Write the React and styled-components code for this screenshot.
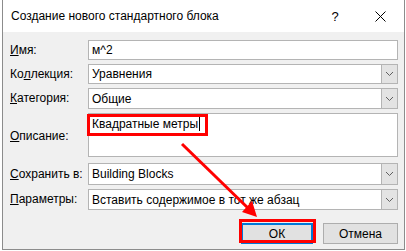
import React from "react";
import styled, { createGlobalStyle } from "styled-components";

const GlobalStyle = createGlobalStyle`
  html, body {
    margin: 0;
    padding: 0;
    background: #ffffff;
  }
  body {
    font-family: "Liberation Sans", Arial, sans-serif;
    font-size: 12px;
    color: #000;
  }
`;

const Page = styled.div`
  position: relative;
  width: 406px;
  height: 251px;
  overflow: hidden;
`;

const Dialog = styled.div`
  box-sizing: border-box;
  margin-left: 2px;
  width: 403px;
  height: 250px;
  border: 1px solid #8c8c8c;
  border-top: none;
  background: #f0f0f0;
  display: flex;
  flex-direction: column;
`;

const TitleBar = styled.div`
  height: 32px;
  background: #ffffff;
  display: flex;
  align-items: center;
  padding-left: 8px;
  flex-shrink: 0;
`;

const Title = styled.div`
  flex: 1;
  font-size: 12px;
  padding-bottom: 1px;
`;

const TitleButton = styled.div`
  width: ${p => p.$w}px;
  margin-left: ${p => p.$gap || 0}px;
  display: flex;
  justify-content: center;
  align-items: center;
  font-size: 13px;
`;

const Body = styled.div`
  flex: 1;
  padding: 8px 6px 0 7px;
  display: flex;
  flex-direction: column;
`;

const Form = styled.div`
  display: grid;
  grid-template-columns: 78px 1fr;
  row-gap: 4px;
`;

const Label = styled.div`
  height: ${p => p.$h}px;
  display: flex;
  align-items: center;
  padding-bottom: 1px;
  box-sizing: border-box;
  white-space: nowrap;
`;

const Field = styled.div`
  box-sizing: border-box;
  height: ${p => p.$h}px;
  background: #ffffff;
  border: 1px solid #b4b4b4;
  display: flex;
  align-items: ${p => (p.$top ? "flex-start" : "center")};
  padding-left: 3px;
  padding-top: ${p => (p.$top ? "3px" : "0")};
  position: relative;
`;

const FieldText = styled.span`
  flex: 1;
  white-space: nowrap;
  overflow: hidden;
`;

const Caret = styled.span`
  display: inline-block;
  width: 1px;
  height: 14px;
  background: #000;
  vertical-align: -3px;
  margin-left: 1px;
`;

const DropButton = styled.div`
  box-sizing: border-box;
  width: 17px;
  align-self: stretch;
  margin: -1px -1px -1px 0;
  background: #e3e3e3;
  border: 1px solid #b4b4b4;
  display: flex;
  align-items: center;
  justify-content: center;
`;

const Footer = styled.div`
  display: flex;
  justify-content: flex-end;
  gap: 10px;
  margin-top: 13px;
`;

const Button = styled.button`
  box-sizing: border-box;
  width: ${p => p.$w}px;
  height: 21px;
  background: #e1e1e1;
  border: ${p => (p.$focus ? "2px solid #0078d7" : "1px solid #adadad")};
  font-family: "Liberation Sans", Arial, sans-serif;
  font-size: 12px;
  color: #000;
  padding: 0;
  margin: 0;
`;

const Highlight = styled.div`
  position: absolute;
  box-sizing: border-box;
  border: 3px solid #ff0000;
  left: ${p => p.$x}px;
  top: ${p => p.$y}px;
  width: ${p => p.$w}px;
  height: ${p => p.$h}px;
  pointer-events: none;
`;

const Overlay = styled.svg`
  position: absolute;
  left: 0;
  top: 0;
  pointer-events: none;
`;

const Chevron = () => (
  <svg width="9" height="6" viewBox="0 0 9 6">
    <path d="M1 1 L4.5 4.5 L8 1" fill="none" stroke="#606060" strokeWidth="1" />
  </svg>
);

const CloseIcon = () => (
  <svg width="11" height="11" viewBox="0 0 11 11">
    <path d="M0.5 0.5 L10.5 10.5 M10.5 0.5 L0.5 10.5" stroke="#000" strokeWidth="1" />
  </svg>
);

const rows = [
  { label: <><u>И</u>мя:</>, value: "м^2", h: 20 },
  { label: <>Ко<u>л</u>лекция:</>, value: "Уравнения", h: 20, drop: true },
  { label: <><u>К</u>атегория:</>, value: "Общие", h: 21, drop: true },
  { label: <><u>О</u>писание:</>, value: <>Квадратные метры<Caret /></>, h: 44, top: true },
  { label: <><u>С</u>охранить в:</>, value: "Building Blocks", h: 22, drop: true },
  { label: <><u>П</u>араметры:</>, value: "Вставить содержимое в тот же абзац", h: 21, drop: true },
];

export default function App() {
  return (
    <Page>
      <GlobalStyle />
      <Dialog>
        <TitleBar>
          <Title>Создание нового стандартного блока</Title>
          <TitleButton $w={14}>?</TitleButton>
          <TitleButton $w={48} $gap={14}>
            <CloseIcon />
          </TitleButton>
        </TitleBar>
        <Body>
          <Form>
            {rows.map((r, i) => (
              <React.Fragment key={i}>
                <Label $h={r.top ? 46 : r.h}>{r.label}</Label>
                <Field $h={r.h} $top={r.top}>
                  <FieldText>{r.value}</FieldText>
                  {r.drop && (
                    <DropButton>
                      <Chevron />
                    </DropButton>
                  )}
                </Field>
              </React.Fragment>
            ))}
          </Form>
          <Footer>
            <Button $w={72} $focus>ОК</Button>
            <Button $w={75}>Отмена</Button>
          </Footer>
        </Body>
      </Dialog>
      <Highlight $x={87} $y={114} $w={121} $h={22} />
      <Highlight $x={239} $y={219} $w={77} $h={24} />
      <Overlay width="406" height="251" viewBox="0 0 406 251">
        <line x1="182" y1="144" x2="250" y2="210" stroke="#ff0000" strokeWidth="3" />
        <polygon points="257,217 242,212 252,201" fill="#ff0000" />
      </Overlay>
    </Page>
  );
}
